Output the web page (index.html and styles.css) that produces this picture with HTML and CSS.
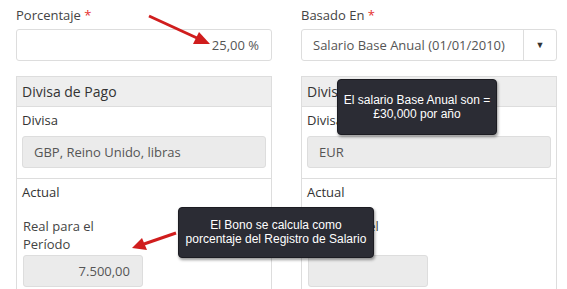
FILE: index.html
```html
<!DOCTYPE html>
<html lang="es">
<head>
    <meta charset="UTF-8">
    <title>Bono</title>
    <link rel="stylesheet" href="styles.css">
</head>
<body>
    <div class="page">
        <div class="columns">
            <div class="column">
                <div class="field">
                    <label class="field-label">Porcentaje <span class="req">*</span></label>
                    <div class="input right">25,00 %</div>
                </div>
                <div class="panel">
                    <div class="panel-head">Divisa de Pago</div>
                    <div class="panel-section">
                        <div class="sub-label">Divisa</div>
                        <div class="input readonly">GBP, Reino Unido, libras</div>
                    </div>
                    <div class="panel-section">
                        <div class="sub-label">Actual</div>
                        <div class="period">
                            <div class="period-label">Real para el Período</div>
                            <div class="input readonly right small">7.500,00</div>
                        </div>
                    </div>
                </div>
            </div>
            <div class="column">
                <div class="field">
                    <label class="field-label">Basado En <span class="req">*</span></label>
                    <div class="select">
                        <span class="select-text">Salario Base Anual (01/01/2010)</span>
                        <span class="select-btn">&#9660;</span>
                    </div>
                </div>
                <div class="panel">
                    <div class="panel-head">Divisa de Pago</div>
                    <div class="panel-section">
                        <div class="sub-label">Divisa</div>
                        <div class="input readonly">EUR</div>
                    </div>
                    <div class="panel-section">
                        <div class="sub-label">Actual</div>
                        <div class="period">
                            <div class="period-label">Real para el Período</div>
                            <div class="input readonly right small"></div>
                        </div>
                    </div>
                </div>
            </div>
        </div>

        <div class="tip tip-salary">El salario Base Anual son =<br>£30,000 por año</div>
        <div class="tip tip-bonus">El Bono se calcula como<br>porcentaje del Registro de Salario</div>

        <svg class="arrows" width="567" height="289" viewBox="0 0 567 289">
            <line x1="149" y1="16" x2="197" y2="38" stroke="#d01d1d" stroke-width="3"/>
            <polygon points="210,44 193,44 199,32" fill="#d01d1d"/>
            <line x1="176" y1="233" x2="144" y2="244" stroke="#d01d1d" stroke-width="3"/>
            <polygon points="132,248 142,238 147,250" fill="#d01d1d"/>
        </svg>
    </div>
</body>
</html>
```

FILE: styles.css
```css
body {
    margin: 0;
    font-family: "Open Sans", Arial, sans-serif;
    font-size: 13px;
    color: #555;
    background-color: #fff;
}
.page {
    position: relative;
    width: 567px;
    height: 289px;
    overflow: hidden;
}
.columns {
    display: grid;
    grid-template-columns: 256px 256px;
    column-gap: 29px;
    padding: 6px 0 0 16px;
}
.field-label {
    display: block;
    line-height: 18px;
    height: 23px;
    color: #444;
}
.req {
    color: #e5312f;
}
.input {
    box-sizing: border-box;
    height: 32px;
    line-height: 30px;
    border: 1px solid #ddd;
    border-radius: 3px;
    padding: 0 12px;
    background-color: #fff;
    color: #555;
    white-space: nowrap;
}
.input.right {
    text-align: right;
}
.input.readonly {
    background-color: #ebebeb;
    padding: 0 11px;
}
.input.readonly.right {
    padding: 0 12px;
}
.input.small {
    width: 120px;
}
.select {
    box-sizing: border-box;
    display: flex;
    height: 32px;
    border: 1px solid #ddd;
    border-radius: 3px;
}
.select-text {
    flex: 1;
    line-height: 30px;
    padding-left: 11px;
}
.select-btn {
    width: 32px;
    border-left: 1px solid #ddd;
    text-align: center;
    line-height: 30px;
    font-size: 9px;
    color: #333;
}
.panel {
    margin-top: 15px;
    border: 1px solid #ddd;
    border-bottom: none;
    height: 220px;
}
.panel-head {
    background-color: #eee;
    border-bottom: 1px solid #ddd;
    height: 29px;
    line-height: 29px;
    padding: 0 5px;
    font-size: 14px;
    color: #333;
}
.panel-section {
    padding: 4px 5px 10px;
}
.panel-section + .panel-section {
    border-top: 1px solid #ddd;
    padding-top: 4px;
}
.sub-label {
    line-height: 18px;
    margin-bottom: 7px;
    color: #333;
}
.period {
    width: 120px;
    padding: 9px 1px 0;
}
.period-label {
    line-height: 18px;
    margin-bottom: 2px;
    color: #444;
}
.tip {
    position: absolute;
    box-sizing: border-box;
    background-color: #2b2c34;
    color: #fff;
    font-family: "Liberation Sans", Arial, sans-serif;
    font-size: 12px;
    line-height: 14px;
    text-align: center;
    border: 1px solid #1c1c22;
    border-radius: 4px;
    box-shadow: 1px 2px 3px rgba(0, 0, 0, 0.4);
}
.tip-salary {
    left: 337px;
    top: 79px;
    width: 160px;
    height: 56px;
    padding-top: 13px;
}
.tip-bonus {
    left: 178px;
    top: 207px;
    width: 196px;
    height: 51px;
    padding-top: 10px;
}
.arrows {
    position: absolute;
    left: 0;
    top: 0;
}
```
